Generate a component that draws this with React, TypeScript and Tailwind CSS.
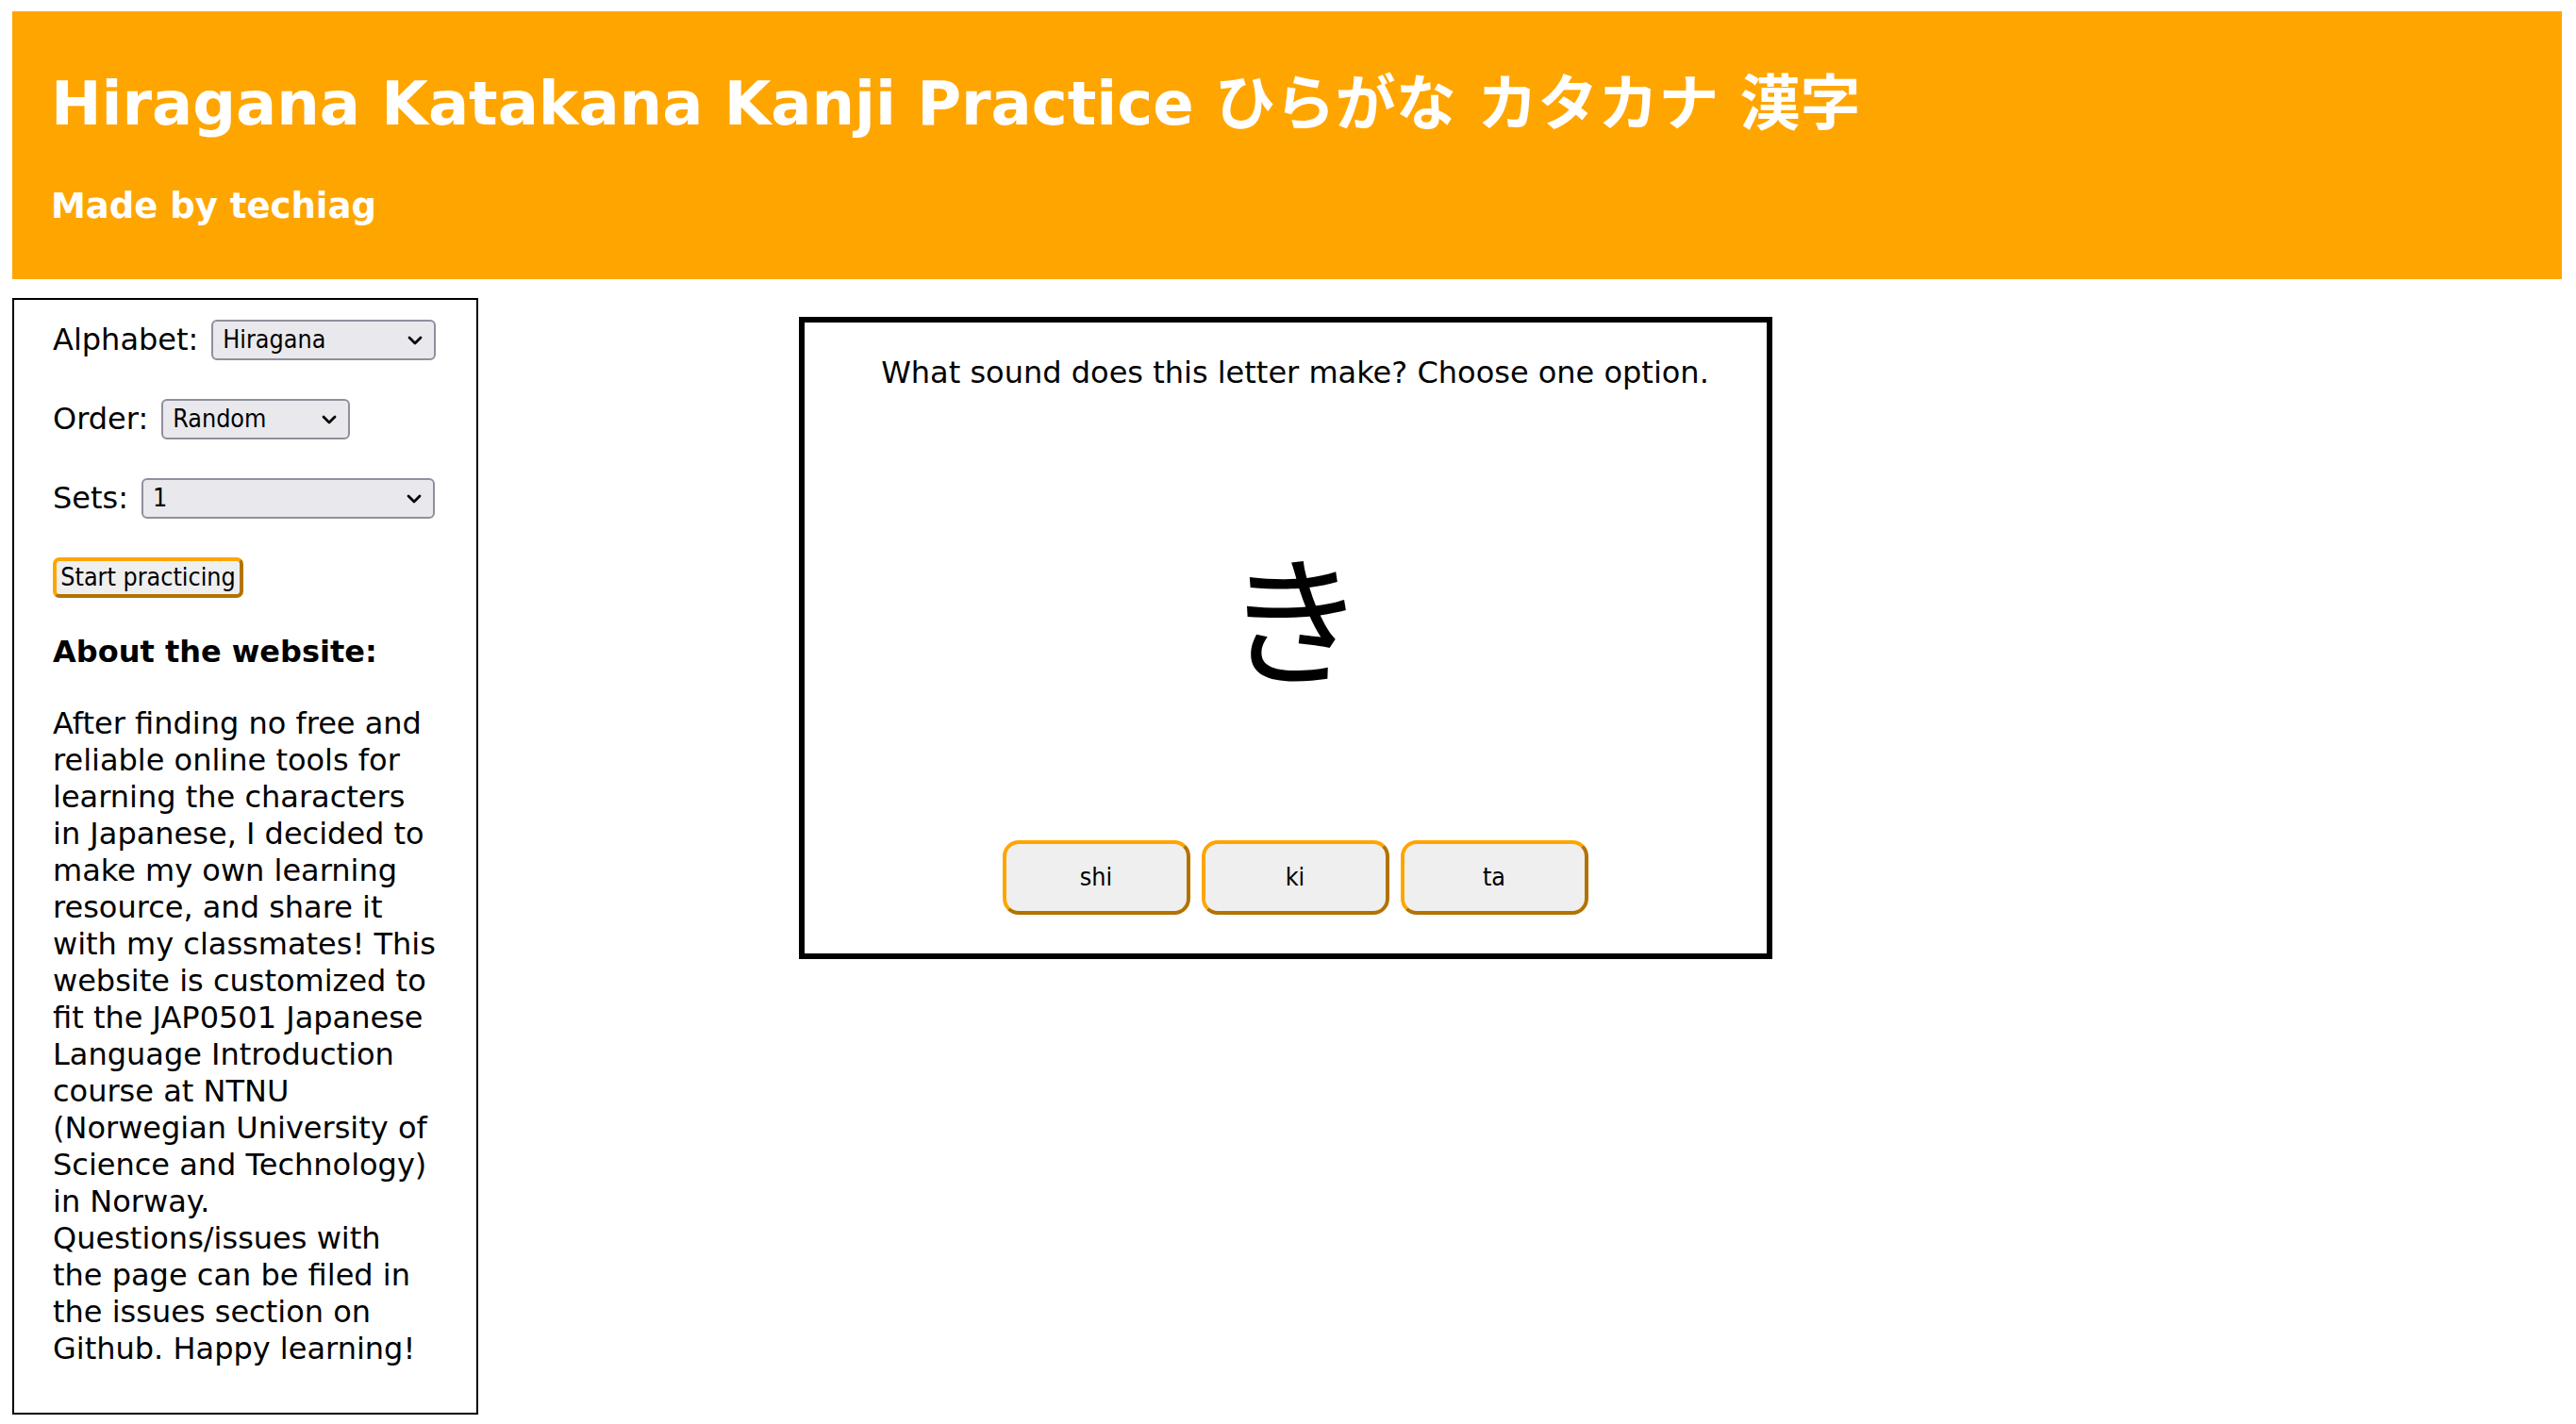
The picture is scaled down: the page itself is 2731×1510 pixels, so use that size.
import React from "react";

const Chevron = () => (
  <svg width="16" height="10" viewBox="0 0 16 10" fill="none" aria-hidden="true">
    <path d="M2 2 L8 8 L14 2" stroke="#000" strokeWidth="2.8" strokeLinecap="round" strokeLinejoin="round" />
  </svg>
);

function FakeSelect({ value, widthClass }: { value: string; widthClass: string }) {
  return (
    <div
      role="combobox"
      className={`flex h-[43px] items-center justify-between rounded-[6px] border-2 border-[#8f8f9d] bg-[#e9e9ed] pl-[10px] pr-[12px] text-[26.67px] leading-none text-black ${widthClass}`}
      style={{ fontFamily: '"DejaVu Sans Condensed", "Liberation Sans", sans-serif' }}
    >
      <span>{value}</span>
      <Chevron />
    </div>
  );
}

function Row({ label, children }: { label: string; children: React.ReactNode }) {
  return (
    <div className="flex h-[43px] items-center gap-[14px]">
      <span className="text-[32px] leading-[37px]">{label}</span>
      {children}
    </div>
  );
}

const orangeBtn =
  "border-[4px] border-t-[#ffa500] border-l-[#ffa500] border-b-[#b27300] border-r-[#b27300] bg-[#efefef] text-black";

export default function App() {
  const controlFont = { fontFamily: '"DejaVu Sans Condensed", "Liberation Sans", sans-serif' };
  return (
    <div
      className="min-h-screen bg-white pt-[12px] pl-[13px] pr-[15px] text-black"
      style={{ fontFamily: '"DejaVu Sans", Verdana, "Noto Sans CJK JP", sans-serif' }}
    >
      <header className="flex flex-col bg-[#ffa500] pt-[61px] pb-[56px] pl-[41px] text-white">
        <h1
          className="text-[64px] font-bold leading-[75px]"
          style={{ fontFamily: '"DejaVu Sans", "Noto Sans CJK JP", sans-serif' }}
        >
          Hiragana Katakana Kanji Practice ひらがな カタカナ 漢字
        </h1>
        <h3 className="mt-[49px] text-[37px] font-bold leading-[43px]">Made by techiag</h3>
      </header>

      <div className="mt-[20px] flex items-start">
        <aside className="flex w-[494px] shrink-0 flex-col border-2 border-black px-[41px] pt-[21px] pb-[48px]">
          <div className="flex flex-col gap-[41px]">
            <Row label="Alphabet:">
              <FakeSelect value="Hiragana" widthClass="w-[238px]" />
            </Row>
            <Row label="Order:">
              <FakeSelect value="Random" widthClass="w-[200px]" />
            </Row>
            <Row label="Sets:">
              <FakeSelect value="1" widthClass="w-[311px]" />
            </Row>
            <div className="flex h-[43px] items-center">
              <button
                className={`h-[43px] w-[202px] rounded-[7px] text-[26.67px] leading-none ${orangeBtn}`}
                style={controlFont}
              >
                Start practicing
              </button>
            </div>
          </div>
          <h3 className="mt-[39px] text-[32px] font-bold leading-[37px]">About the website:</h3>
          <p className="mt-[38px] text-[32px] leading-[39px]">
            After finding no free and reliable online tools for learning the characters in Japanese, I decided to
            make my own learning resource, and share it with my classmates! This website is customized to fit the
            JAP0501 Japanese Language Introduction course at NTNU (Norwegian University of Science and Technology)
            in Norway. Questions/issues with the page can be filed in the issues section on Github. Happy learning!
          </p>
        </aside>

        <main className="ml-[340px] mt-[20px] w-[1032px] shrink-0 border-[6px] border-black">
          <div className="flex h-[669px] flex-col items-center pl-[20px] pt-[35px]">
            <p className="text-[32px] leading-[37px]">What sound does this letter make? Choose one option.</p>
            <div
              className="mt-[161px] text-[150px] leading-[150px]"
              style={{ fontFamily: '"Noto Sans CJK JP", sans-serif' }}
            >
              き
            </div>
            <div className="mt-[166px] flex gap-[12px]">
              {["shi", "ki", "ta"].map((o) => (
                <button
                  key={o}
                  className={`h-[79px] w-[199px] rounded-[17px] text-[26.67px] leading-none ${orangeBtn}`}
                  style={controlFont}
                >
                  {o}
                </button>
              ))}
            </div>
          </div>
        </main>
      </div>
    </div>
  );
}
